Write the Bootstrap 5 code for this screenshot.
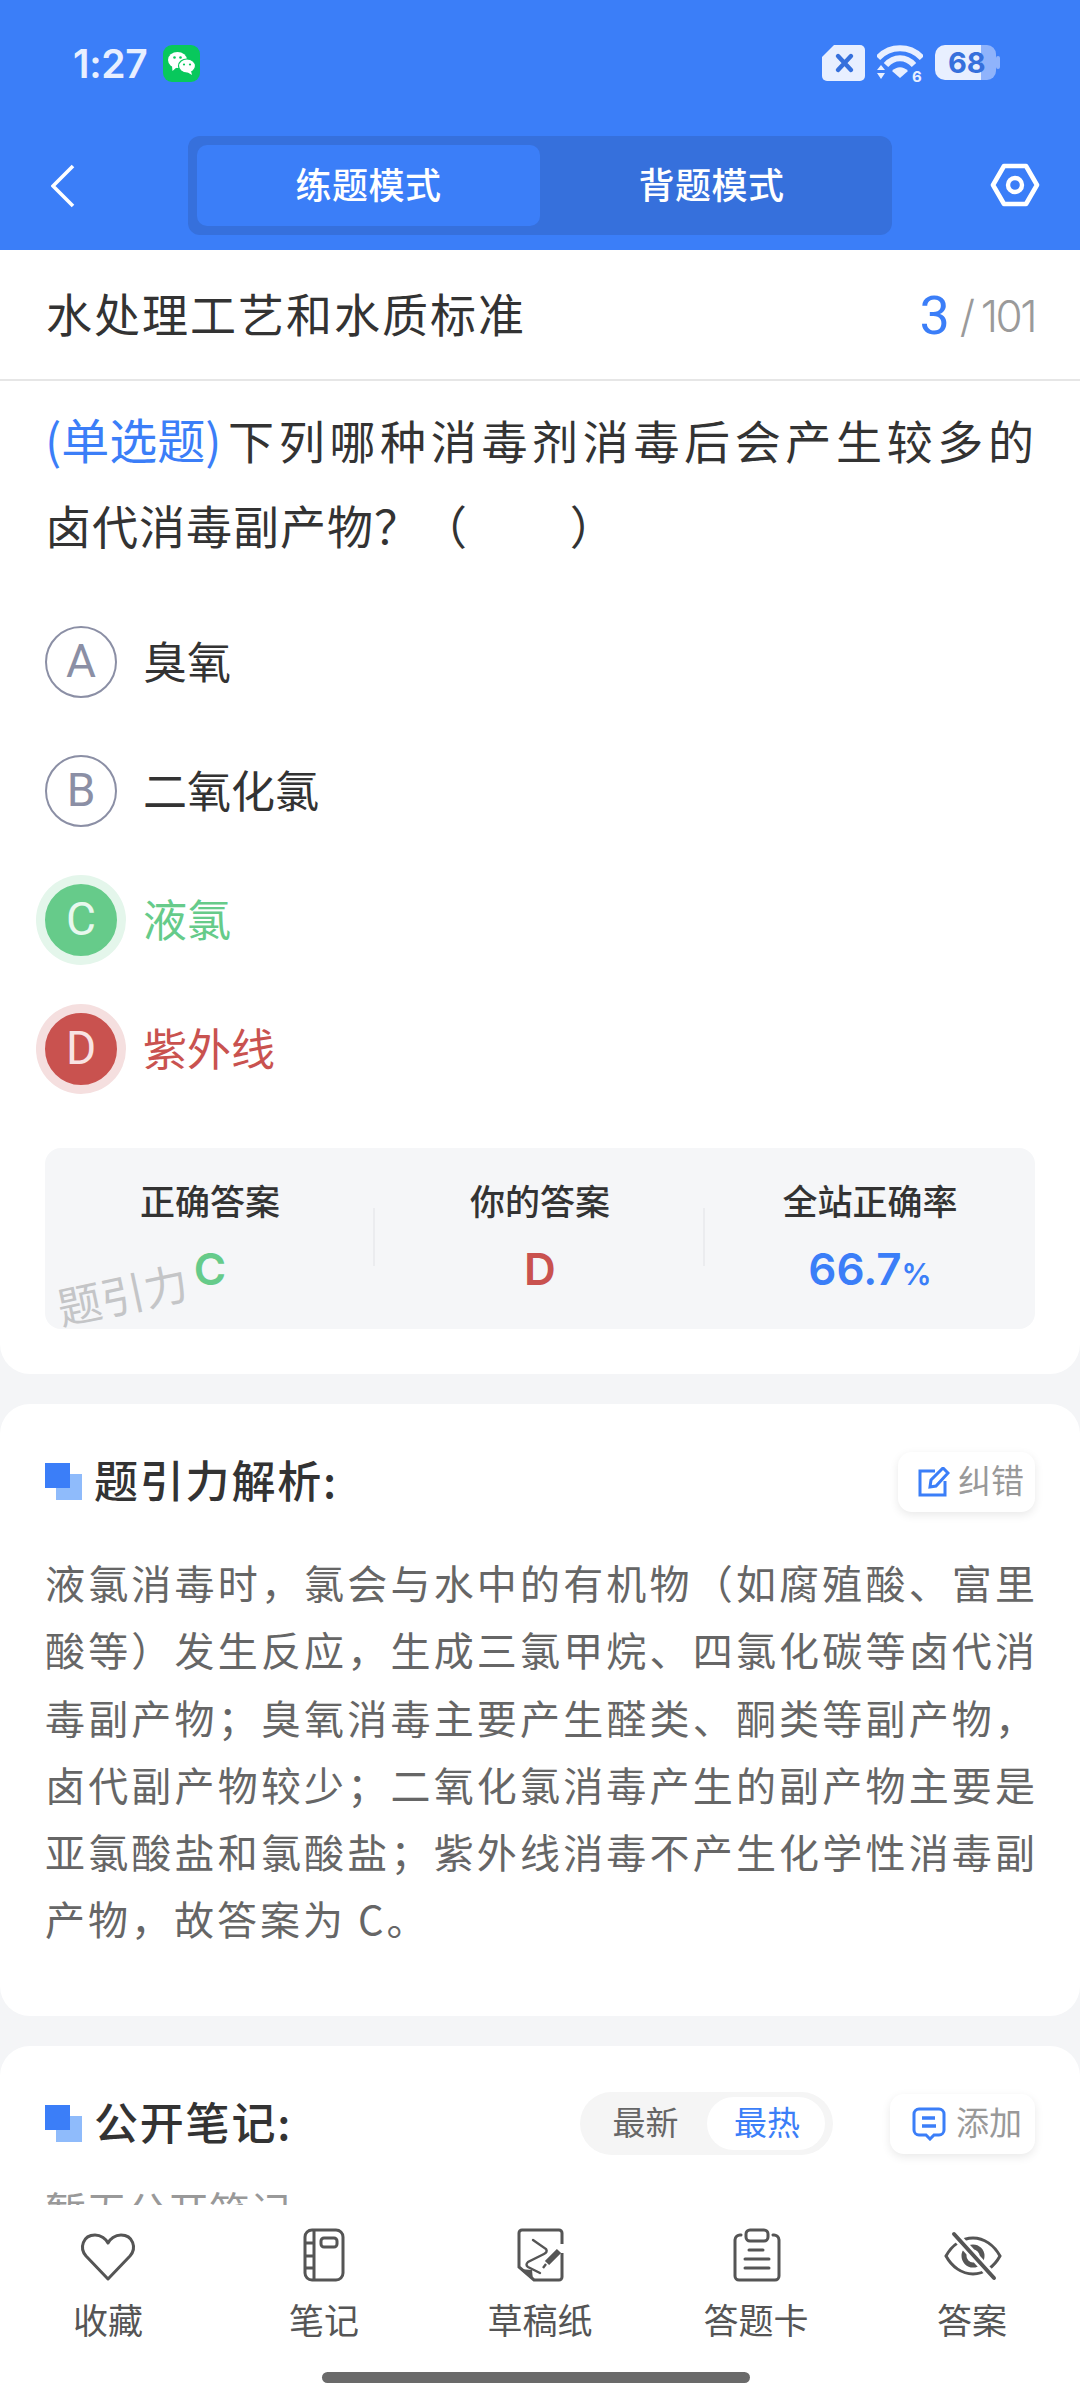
<!DOCTYPE html>
<html lang="zh-CN">
<head>
  <meta charset="UTF-8" />
  <meta name="viewport" content="width=device-width, initial-scale=1.0"/>
  <title>练题模式</title>
  <link href="https://cdn.jsdelivr.net/npm/bootstrap@5.3.0/dist/css/bootstrap.min.css" rel="stylesheet">
  <style>
    html, body { height: 2400px; overflow: hidden; }
    body {
      font-family: "Noto Sans CJK SC", "Noto Sans", sans-serif;
      background: #f4f5f7;
      color: #333;
    }
    svg { display: block; flex: none; }

    /* blue top */
    .top-head { height: 250px; background: #3b7ef8; }
    .status-row { height: 136px; padding: 45px 80px 0 73px; }
    .clock { font-family: Inter, sans-serif; font-weight: 600; font-size: 39px; line-height: 37px; color: #e8efff; letter-spacing: -.3px; width: 90px; }
    .status-icons { gap: 12px; align-items: flex-start; }
    .nav-row { padding: 0 40px; height: 99px; }
    .back-box { width: 148px; padding-left: 11px; }
    .mode-switch { width: 704px; height: 99px; background: #3670dc; border-radius: 12px; padding: 9px; }
    .mode-item { width: 343px; height: 81px; font-size: 36px; color: #fff; border-radius: 10px; font-weight: 500; letter-spacing: .5px; padding-bottom: 6px; }
    .mode-item.on { background: #3b7ef8; }

    /* question */
    .paper { background: #fff; }
    .title-row { height: 131px; padding: 0 45px 5px 46px; border-bottom: 2px solid #e6e6e6; }
    .sheet-name { font-size: 46px; letter-spacing: 2px; color: #333; }
    .counter { font-family: Inter, sans-serif; font-weight: 300; font-size: 44px; letter-spacing: -2.5px; color: #9a9a9a; padding-top: 7px; }
    .counter b { font-family: Roboto, sans-serif; font-weight: 400; font-size: 54px; color: #3b7ef8; margin-right: 10px; letter-spacing: 0; }
    .counter i { font-style: normal; margin-right: 8px; }
    .q-card { height: 993px; border-radius: 0 0 30px 30px; padding: 0 45px; }
    .q-text { font-size: 46px; line-height: 86px; letter-spacing: 1px; color: #333; padding-top: 14px; }
    .q-first { text-align-last: justify; }
    .q-type { color: #3b7ef8; letter-spacing: 0; }
    .q-first .q-type { display: inline-block; font-size: 48px; margin-right: 3px; }
    .q-second { margin-top: -1px; }
    .opt-list { margin-top: 30px; }
    .opt-row { height: 129px; gap: 26px; font-size: 44px; }
    .opt-name { padding-bottom: 4px; }
    .opt-dot { width: 72px; height: 72px; border-radius: 50%; border: 2px solid #8b8fa5; color: #8b8fa5; font-family: Roboto, sans-serif; font-size: 46px; font-weight: 400; }
    .opt-good { color: #66cb8a; }
    .opt-good .opt-dot { background: #66cb8a; border-color: #66cb8a; color: #e8f8ee; box-shadow: 0 0 0 9px #e4f6eb; }
    .opt-bad { color: #c9524f; }
    .opt-bad .opt-dot { background: #c9524f; border-color: #c9524f; color: #f8e4e4; box-shadow: 0 0 0 9px #f5dfdf; }

    .stat-box { height: 181px; background: #f5f6f8; border-radius: 16px; margin-top: 35px; }
    .stat-cell { height: 181px; text-align: center; padding-top: 30px; }
    .stat-cell + .stat-cell::before { content: ""; position: absolute; left: -2px; top: 60px; height: 58px; width: 2px; background: #ebecef; }
    .stat-name { font-size: 35px; line-height: 44px; font-weight: 500; color: #333; }
    .stat-val { font-family: Inter, sans-serif; font-size: 44px; line-height: 50px; font-weight: 600; margin-top: 22px; }
    .stat-val small { font-size: 30px; }
    .stat-box > .stamp { width: auto; left: 11px; top: 120px; font-size: 44px; line-height: 50px; color: #c4c5c7; transform: rotate(-12deg); }

    /* explanation and notes */
    .sect-card { border-radius: 30px; padding: 0 45px; margin-top: 30px; }
    .expl-card { height: 612px; padding-top: 45px; }
    .sect-title { font-size: 44px; font-weight: 500; letter-spacing: 1.8px; color: #333; gap: 12px; line-height: 60px; }
    .sect-title span { padding-bottom: 5px; }
    .small-btn { background: #fff; border-radius: 14px; box-shadow: 0 3px 10px rgba(0, 0, 0, .09); font-size: 33px; color: #999; gap: 8px; height: 60px; }
    .small-btn span { padding-bottom: 3px; }
    .fix-btn { width: 137px; padding-left: 20px; }
    .add-btn { width: 145px; padding-left: 22px; gap: 10px; }
    .expl-text { font-size: 40px; line-height: 67.3px; letter-spacing: 3px; color: #666; margin: 35px -3px 0 0; text-align: justify; }
    .note-card { height: 400px; padding-top: 46px; }
    .sort-pill { width: 253px; height: 63px; background: #f5f5f5; border-radius: 32px; padding: 5px 8px 5px 0; font-size: 33px; color: #666; }
    .sort-item { height: 53px; width: 118px; border-radius: 27px; padding: 0 0 3px 2px; }
    .sort-item.on { background: #fff; color: #3b7ef8; }
    .sort-first { width: 127px; padding-left: 4px; }
    .note-head { height: 63px; }
    .note-tools { gap: 57px; }
    .no-notes { font-size: 41px; line-height: 60px; color: #999; margin-top: 24px; }

    /* bottom bar lies over the notes card */
    .tool-bar { left: 0; right: 0; top: 2205px; height: 195px; background: #fff; }
    .tool-col { width: 216px; padding-top: 20px; text-align: center; font-size: 35px; line-height: 46px; color: #555; }
    .tool-col svg { margin: 0 auto 11px; }
    .home-line { left: 322px; top: 167px; width: 428px; height: 11px; background: #6a6a6a; border-radius: 6px; }
  </style>
</head>
<body>
  <div class="top-head">
    <div class="status-row d-flex justify-content-between">
      <div class="d-flex">
        <div class="clock">1:27</div>
        <svg width="37" height="37" viewBox="0 0 37 37">
          <rect width="37" height="37" rx="9" fill="#08c85c"/>
          <ellipse cx="14.5" cy="15" rx="9.5" ry="8" fill="#fff"/>
          <path d="M9 21 L9.5 26 L14 22 Z" fill="#fff"/>
          <ellipse cx="24" cy="21" rx="8.5" ry="7" fill="#fff" stroke="#08c85c" stroke-width="1.2"/>
          <path d="M28 26 L29 30 L24 27 Z" fill="#fff"/>
          <circle cx="11.5" cy="12.5" r="1.3" fill="#08c85c"/><circle cx="17.5" cy="12.5" r="1.3" fill="#08c85c"/>
          <circle cx="21" cy="19.5" r="1.1" fill="#08c85c"/><circle cx="27" cy="19.5" r="1.1" fill="#08c85c"/>
        </svg>
      </div>
      <div class="status-icons d-flex">
        <svg width="43" height="36" viewBox="0 0 43 36">
          <path d="M12 0 H38 a5 5 0 0 1 5 5 V31 a5 5 0 0 1 -5 5 H5 a5 5 0 0 1 -5 -5 V12 Z" fill="#e8efff"/>
          <path d="M16 11 L29 25 M29 11 L16 25" stroke="#3670dc" stroke-width="4.4" stroke-linecap="round"/>
        </svg>
        <svg width="46" height="44" viewBox="0 0 46 44">
          <path d="M1 13 C13 0 33 0 45 13" fill="none" stroke="#e8efff" stroke-width="6"/>
          <path d="M9 20 C17 11 29 11 37 20" fill="none" stroke="#e8efff" stroke-width="6"/>
          <path d="M15 26 C20 21 26 21 31 26 L23 33 Z" fill="#e8efff"/>
          <path d="M4 20 L8 25 H0 Z M0 28 H8 L4 34 Z" fill="#e8efff"/>
          <text x="35" y="37" font-family="Inter, sans-serif" font-size="15" font-weight="700" fill="#e8efff">6</text>
        </svg>
        <svg width="65" height="35" viewBox="0 0 65 35">
          <path d="M46 0 H52 a9 9 0 0 1 9 9 V26 a9 9 0 0 1 -9 9 H46 Z" fill="#8fb3fb"/>
          <rect x="61" y="11" width="4" height="13" rx="2" fill="#8fb3fb"/>
          <path d="M46 0 H10 a10 10 0 0 0 -10 10 V25 a10 10 0 0 0 10 10 H46 Z" fill="#e8efff"/>
          <text x="13" y="28" font-family="Inter, sans-serif" font-size="29" font-weight="700" fill="#3670dc">68</text>
        </svg>
      </div>
    </div>
    <div class="nav-row d-flex align-items-center">
      <div class="back-box">
        <svg width="24" height="44" viewBox="0 0 24 44"><path d="M22 2 L2 22 L22 42" fill="none" stroke="#fff" stroke-width="3.6"/></svg>
      </div>
      <div class="mode-switch d-flex">
        <div class="mode-item on d-flex align-items-center justify-content-center">练题模式</div>
        <div class="mode-item d-flex align-items-center justify-content-center">背题模式</div>
      </div>
      <div class="flex-grow-1 d-flex justify-content-end">
        <svg width="50" height="46" viewBox="0 0 50 46">
          <path d="M14 3 H36 L47 22 L36 41 H14 L3 22 Z" fill="none" stroke="#fff" stroke-width="4.6" stroke-linejoin="round"/>
          <circle cx="25" cy="22" r="7" fill="none" stroke="#fff" stroke-width="4.4"/>
        </svg>
      </div>
    </div>
  </div>

  <div class="paper title-row d-flex align-items-center justify-content-between">
    <div class="sheet-name">水处理工艺和水质标准</div>
    <div class="counter d-flex align-items-center"><b>3</b><i>/</i>101</div>
  </div>

  <div class="paper q-card">
    <div class="q-text">
      <div class="q-first"><span class="q-type">(单选题)</span>下列哪种消毒剂消毒后会产生较多的</div>
      <div class="q-second">卤代消毒副产物？（&nbsp;&nbsp;&nbsp;&nbsp;&nbsp;&nbsp;&nbsp;&nbsp;&nbsp;）</div>
    </div>
    <div class="opt-list">
      <div class="opt-row d-flex align-items-center"><div class="opt-dot d-flex align-items-center justify-content-center">A</div><div class="opt-name">臭氧</div></div>
      <div class="opt-row d-flex align-items-center"><div class="opt-dot d-flex align-items-center justify-content-center">B</div><div class="opt-name">二氧化氯</div></div>
      <div class="opt-row opt-good d-flex align-items-center"><div class="opt-dot d-flex align-items-center justify-content-center">C</div><div class="opt-name">液氯</div></div>
      <div class="opt-row opt-bad d-flex align-items-center"><div class="opt-dot d-flex align-items-center justify-content-center">D</div><div class="opt-name">紫外线</div></div>
    </div>
    <div class="stat-box row g-0 position-relative">
      <div class="col-4 stat-cell position-relative">
        <div class="stat-name">正确答案</div>
        <div class="stat-val opt-good">C</div>
      </div>
      <div class="col-4 stat-cell position-relative">
        <div class="stat-name">你的答案</div>
        <div class="stat-val opt-bad">D</div>
      </div>
      <div class="col-4 stat-cell position-relative">
        <div class="stat-name">全站正确率</div>
        <div class="stat-val q-type">66.7<small>%</small></div>
      </div>
      <div class="stamp position-absolute">题引力</div>
    </div>
  </div>

  <div class="paper sect-card expl-card">
    <div class="d-flex align-items-center justify-content-between">
      <div class="sect-title d-flex align-items-center">
        <svg width="37" height="37" viewBox="0 0 37 37"><rect x="11" y="11" width="26" height="26" fill="#8fbbfb"/><rect width="25" height="25" fill="#3b7ef8"/></svg>
        <span>题引力解析:</span>
      </div>
      <div class="small-btn fix-btn d-flex align-items-center">
        <svg width="32" height="30" viewBox="0 0 32 30">
          <path d="M17 4 H2 V28 H27 V14" fill="none" stroke="#3b7ef8" stroke-width="3"/>
          <path d="M12 20 L13 13 L25 1 L30 6 L18 19 Z" fill="none" stroke="#3b7ef8" stroke-width="3"/>
        </svg>
        <span>纠错</span>
      </div>
    </div>
    <div class="expl-text">液氯消毒时，氯会与水中的有机物（如腐殖酸、富里酸等）发生反应，生成三氯甲烷、四氯化碳等卤代消毒副产物；臭氧消毒主要产生醛类、酮类等副产物，卤代副产物较少；二氧化氯消毒产生的副产物主要是亚氯酸盐和氯酸盐；紫外线消毒不产生化学性消毒副产物，故答案为 C。</div>
  </div>

  <div class="paper sect-card note-card">
    <div class="note-head d-flex align-items-center justify-content-between">
      <div class="sect-title d-flex align-items-center">
        <svg width="37" height="37" viewBox="0 0 37 37"><rect x="11" y="11" width="26" height="26" fill="#8fbbfb"/><rect width="25" height="25" fill="#3b7ef8"/></svg>
        <span>公开笔记:</span>
      </div>
      <div class="note-tools d-flex align-items-center">
        <div class="sort-pill d-flex align-items-center">
          <div class="sort-item sort-first d-flex align-items-center justify-content-center">最新</div>
          <div class="sort-item on d-flex align-items-center justify-content-center">最热</div>
        </div>
        <div class="small-btn add-btn d-flex align-items-center">
          <svg width="34" height="34" viewBox="0 0 34 34">
            <path d="M7 2 H27 a5 5 0 0 1 5 5 V23 a5 5 0 0 1 -5 5 H22 L18 32 L14 28 H7 a5 5 0 0 1 -5 -5 V7 a5 5 0 0 1 5 -5 Z" fill="none" stroke="#3b7ef8" stroke-width="3"/>
            <path d="M10 11 H23 M10 19 H24" stroke="#3b7ef8" stroke-width="3.4"/>
          </svg>
          <span>添加</span>
        </div>
      </div>
    </div>
    <div class="no-notes">暂无公开笔记</div>
  </div>

  <div class="tool-bar position-absolute">
    <div class="d-flex">
      <div class="tool-col">
        <svg width="60" height="60" viewBox="0 0 60 60"><path d="M30 54 L8 31 C1 23 5 10 17 10 C23 10 28 14 30 18 C32 14 37 10 43 10 C55 10 59 23 52 31 Z" fill="none" stroke="#555" stroke-width="3" stroke-linejoin="round"/></svg>
        收藏
      </div>
      <div class="tool-col">
        <svg width="60" height="60" viewBox="0 0 60 60" fill="none" stroke="#555" stroke-width="3">
          <rect x="11" y="5" width="38" height="50" rx="7"/>
          <path d="M20 5 V55 M11 18 H20 M11 31 H20 M11 43 H20"/>
          <rect x="27" y="13" width="16" height="9" rx="3"/>
        </svg>
        笔记
      </div>
      <div class="tool-col">
        <svg width="60" height="60" viewBox="0 0 60 60" fill="none" stroke="#555" stroke-width="3">
          <path d="M52 19 V8 a3 3 0 0 0 -3 -3 H12 a3 3 0 0 0 -3 3 V42 L24 55 H49 a3 3 0 0 0 3 -3 V28"/>
          <path d="M10 44 L22 45 L23 55 Z" fill="#555" stroke="none"/>
          <path d="M23 15 L36 24 Q38 27 34 29 L18 37 Q15 40 18 42 L30 48" stroke-width="2.4" stroke-linecap="round"/>
          <path d="M37 38 L49 26" stroke-width="6"/>
          <path d="M33 43 L36 39" stroke-width="2.4"/>
        </svg>
        草稿纸
      </div>
      <div class="tool-col">
        <svg width="60" height="60" viewBox="0 0 60 60" fill="none" stroke="#555" stroke-width="3" stroke-linecap="round">
          <path d="M15 10 a5 5 0 0 0 -6 5 V51 a4 4 0 0 0 4 4 H49 a4 4 0 0 0 4 -4 V15 a5 5 0 0 0 -6 -5"/>
          <rect x="20" y="5" width="22" height="11" rx="4"/>
          <path d="M23 25 H37 M19 34 H43 M19 43 H43"/>
        </svg>
        答题卡
      </div>
      <div class="tool-col">
        <svg width="60" height="60" viewBox="0 0 60 60" fill="none" stroke="#555" stroke-width="3">
          <path d="M4 31 C10 20 20 13 31 13 C42 13 52 20 58 31 C52 42 42 49 31 49 C20 49 10 42 4 31 Z"/>
          <circle cx="31" cy="31" r="9" stroke-width="5"/>
          <path d="M12 9 L52 53" stroke="#fff" stroke-width="9"/>
          <path d="M12 9 L52 53" stroke-width="4" stroke-linecap="round"/>
        </svg>
        答案
      </div>
    </div>
    <div class="home-line position-absolute"></div>
  </div>

  <script src="https://cdn.jsdelivr.net/npm/bootstrap@5.3.0/dist/js/bootstrap.bundle.min.js"></script>
</body>
</html>
